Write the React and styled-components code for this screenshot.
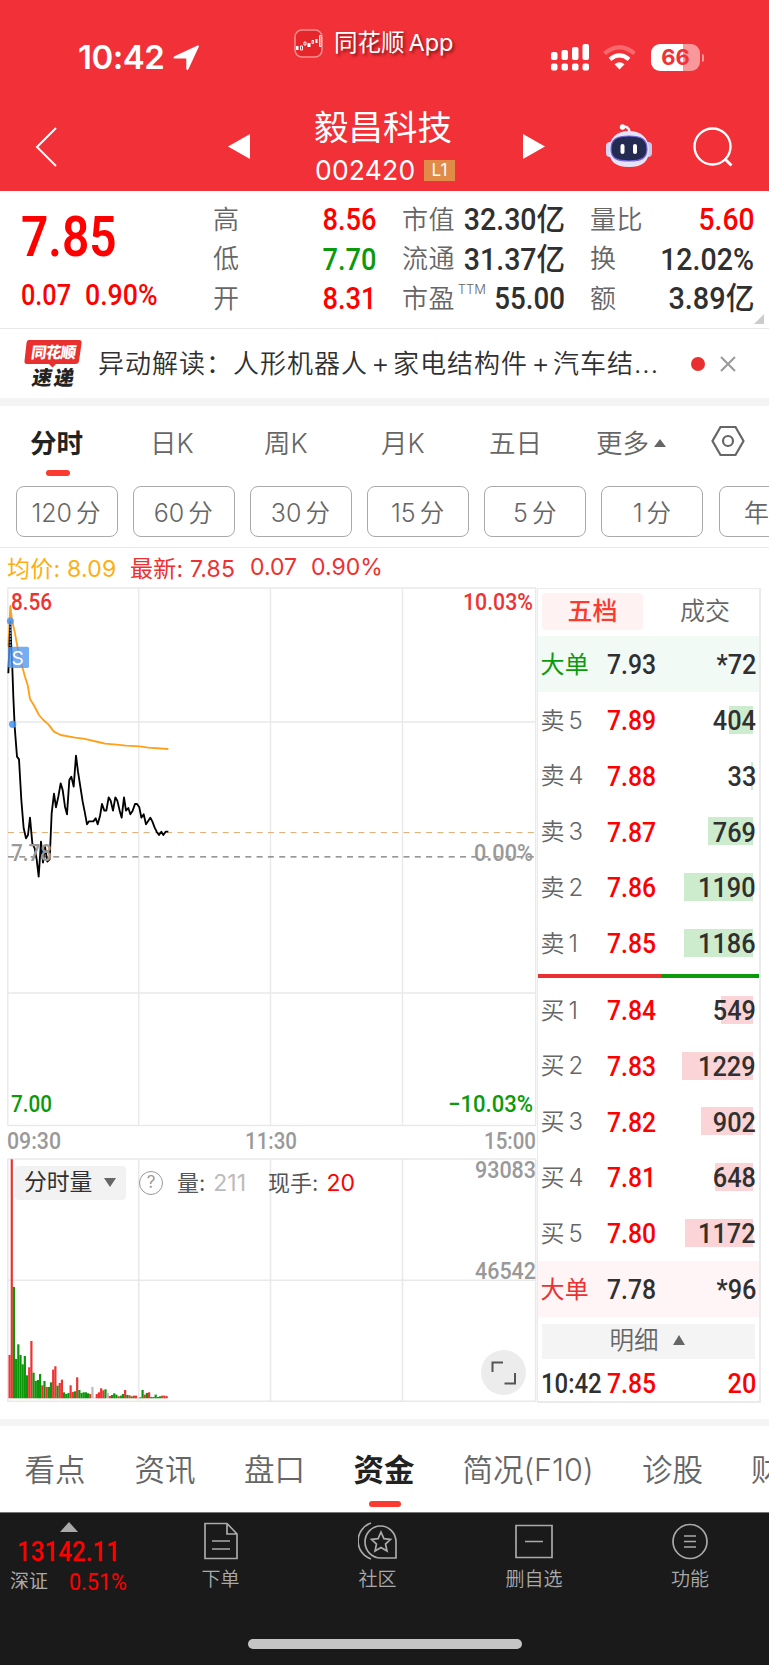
import React, { useState } from 'react';
import styled, { createGlobalStyle } from 'styled-components';

const GlobalStyle = createGlobalStyle`
  * {
    box-sizing: border-box;
  }

  body {
    margin: 0;
    background: #fff;
    font-family: Inter, 'Noto Sans CJK SC', sans-serif;
    overflow-x: hidden;
  }
`

const Page = styled.div`
  width: 769px;
  height: 1665px;
  overflow: hidden;
  display: flex;
  flex-direction: column;
`

const Din = styled.span`
  display: inline-block;
  font-family: Roboto, 'Noto Sans CJK SC', sans-serif;
  font-weight: ${props => props.$weight || 500};
  font-size: ${props => props.$size}px;
  line-height: 1;
  white-space: nowrap;
  color: ${props => props.$color || '#303030'};
  transform: scaleX(${props => props.$sx || 1});
  transform-origin: ${props => props.$origin || 'left'} center;
`

/* header */

const Header = styled.header`
  height: 191px;
  flex: none;
  background: #f23037;
  color: #fff;
`

const StatusBar = styled.div`
  height: 100px;
  display: flex;
  align-items: flex-start;
`

const Clock = styled.div`
  width: 94px;
  margin: 40px 0 0 78px;
  font-size: 33px;
  line-height: 35px;
  font-weight: 600;
  letter-spacing: -0.5px;
`

const AppBadge = styled.div`
  display: flex;
  align-items: center;
  gap: 11px;
  width: 257px;
  margin: 29px 0 0 94px;
  height: 29px;
  font-size: 23.5px;
  line-height: 28px;
  white-space: nowrap;
  text-shadow: 2px 2px 3px rgba(60, 0, 0, .6);

  & > span {
    margin-top: -2px;
  }

  & > span > b {
    font-weight: 400;
    font-size: 23.5px;
    margin-left: 4px;
  }
`

const Indicators = styled.div`
  display: flex;
  align-items: center;
  margin-top: 44px;
`

const Battery = styled.div`
  width: 49px;
  height: 27px;
  margin-left: 15px;
  border-radius: 9px;
  background: linear-gradient(90deg, #fff 66%, #f9989b 66%);
  color: #f23037;
  font-size: 22px;
  line-height: 27px;
  font-weight: 700;
  text-align: center;
`

const BatteryTip = styled.div`
  width: 2px;
  height: 8px;
  margin-left: 2px;
  border-radius: 0 2px 2px 0;
  background: #f9989b;
`

const NavBar = styled.div`
  height: 91px;
  display: flex;
  align-items: flex-start;

  & > svg {
    flex: none;
    display: block;
  }
`

const TitleBlock = styled.div`
  width: 273px;
  padding-left: 64px;
  margin-top: 5px;

  & > h1 {
    margin: 0;
    font-size: 34.5px;
    line-height: 46px;
    font-weight: 400;
    white-space: nowrap;
  }
`

const CodeLine = styled.div`
  display: flex;
  align-items: center;
  height: 24px;
  margin-top: 7px;
  font-size: 26.5px;
  line-height: 24px;

  & > span {
    width: 109px;
    margin-left: 1px;
    letter-spacing: 0.2px;
  }
`

const Level = styled.em`
  width: 31px;
  height: 21px;
  background: #e08c48;
  font-style: normal;
  font-size: 17px;
  line-height: 21px;
  text-align: center;
`

/* quote */

const Quote = styled.section`
  height: 138px;
  flex: none;
  display: flex;
  border-bottom: 1px solid #e8e8e8;
  position: relative;
`

const Main = styled.div`
  width: 213px;
  padding: 19px 0 0 21px;
`

const MainChange = styled.div`
  display: flex;
  margin-top: 16px;

  & > span:first-child {
    width: 64px;
  }
`

const StatColumn = styled.div`
  width: ${props => props.$width}px;
  margin-right: ${props => props.$gap || 0}px;
  padding-top: 9px;
`

const Stat = styled.div`
  height: 39.6px;
  display: flex;
  align-items: center;
  justify-content: space-between;
`

const Label = styled.span`
  font-size: 26px;
  line-height: 36px;
  font-weight: 350;
  letter-spacing: 0.4px;
  color: #666;
  white-space: nowrap;

  & > sup {
    display: inline-block;
    width: 0;
    font-size: 13px;
    letter-spacing: 0;
    line-height: 0;
    vertical-align: 14px;
    margin-left: 3px;
  }
`

const Corner = styled.i`
  position: absolute;
  right: 5px;
  bottom: 4px;
  border-bottom: 10px solid #ccc;
  border-left: 10px solid transparent;
`

const News = styled.div`
  height: 69px;
  flex: none;
  display: flex;
  align-items: center;
  padding-left: 24px;
`

const NewsText = styled.div`
  width: 593px;
  margin-left: 15px;
  font-size: 26px;
  letter-spacing: 1px;
  line-height: 38px;
  font-weight: 350;
  color: #303030;
  white-space: nowrap;

  & > b {
    display: inline-block;
    width: 25px;
    text-align: center;
    font-weight: 300;
    font-size: 28px;
    letter-spacing: 0;
  }
`

const Dot = styled.i`
  width: 14px;
  height: 14px;
  border-radius: 50%;
  background: #e93030;
  margin-right: 15px;
`

const Band = styled.div`
  height: 8px;
  flex: none;
  background: #f4f4f4;
`

/* period tabs */

const Periods = styled.nav`
  height: 80px;
  flex: none;
  display: grid;
  grid-template-columns: 120px 114px 117px 108px 107px 115px 60px;
  padding-left: 30px;
`

const Period = styled.div`
  padding-top: 18px;
  font-size: 26.5px;
  line-height: 38px;
  white-space: nowrap;
  font-weight: ${props => props.$active ? 600 : 350};
  color: ${props => props.$active ? '#222' : '#666'};
  cursor: pointer;
`

const Underline = styled.i`
  display: block;
  width: ${props => props.$width}px;
  height: 6px;
  border-radius: 3px;
  background: #fb3a30;
  margin: ${props => props.$margin};
`

const Caret = styled.i`
  display: inline-block;
  border: ${props => props.$size}px solid transparent;
  border-top-width: 0;
  border-bottom: ${props => props.$height}px solid ${props => props.$color || '#666'};
  transform: ${props => props.$down ? 'rotate(180deg)' : 'none'};
`

const Minutes = styled.div`
  height: 62px;
  flex: none;
  display: flex;
  gap: 15.2px;
  padding-left: 15.5px;
  overflow: hidden;
  border-bottom: 1px solid #e8e8e8;
`

const Minute = styled.button`
  flex: none;
  width: 102px;
  height: 51px;
  padding: 0 1px 1px 0;
  border: 1px solid #aaa;
  border-radius: 8px;
  background: #fff;
  color: #666;
  font: 350 25px Inter, 'Noto Sans CJK SC', sans-serif;
  white-space: nowrap;

  & > span {
    margin-left: 4px;
    font-size: 24.5px;
  }
`

const Legend = styled.div`
  height: 40px;
  flex: none;
  display: flex;
  align-items: center;
  padding: 0 0 2px 7px;
  font-size: 23px;
  white-space: nowrap;
`

const LegendItem = styled.div`
  width: ${props => props.$width}px;
  color: ${props => props.$color || '#ee3030'};
  letter-spacing: ${props => props.$spacing || 0}px;
`

/* chart + order book */

const Trading = styled.section`
  height: 831px;
  flex: none;
  display: flex;
`

const Charts = styled.div`
  width: 537px;
  display: flex;
  flex-direction: column;
  position: relative;

  & svg {
    display: block;
    overflow: visible;
  }
`

const VolumeBar = styled.div`
  position: absolute;
  left: 15px;
  top: 578px;
  height: 34px;
  display: flex;
  align-items: center;
  font-size: 22px;
  line-height: 30px;
  color: #555;
  white-space: nowrap;
`

const Select = styled.div`
  width: 111px;
  height: 34px;
  display: flex;
  align-items: center;
  padding: 0 0 2px 9px;
  gap: 12px;
  border-radius: 4px;
  background: #f2f2f2;
  color: #303030;
  font-size: 22.8px;
`

const Help = styled.i`
  width: 24px;
  height: 24px;
  margin: 0 14px 0 13px;
  border: 1.5px solid #999;
  border-radius: 50%;
  font-style: normal;
  font-size: 17px;
  line-height: 21px;
  text-align: center;
  color: #999;
`

const VolumeValue = styled.span`
  color: ${props => props.$color};
  margin: 0 ${props => props.$gap}px 0 8px;
  font-size: 23px;
`

const Expand = styled.div`
  position: absolute;
  left: 481px;
  top: 762px;
  width: 45px;
  height: 45px;
  border-radius: 50%;
  background: #ececec;
`

const Book = styled.div`
  width: 224px;
  height: 815px;
  border: 2px solid #ebebeb;
  border-top-width: 1px;
  border-left-width: 1px;
`

const BookTabs = styled.div`
  height: 47px;
  display: grid;
  grid-template-columns: 101px 1fr;
  padding: 4px 4px 6px 4px;
`

const BookTab = styled.div`
  border-radius: 4px;
  background: ${props => props.$active ? '#fff2f2' : 'none'};
  color: ${props => props.$active ? '#fb3a30' : '#666'};
  font-weight: ${props => props.$active ? 500 : 350};
  font-size: 25px;
  line-height: 37px;
  text-align: center;
  padding-left: ${props => props.$active ? 0 : 12}px;
`

const BookRow = styled.div`
  height: 55.8px;
  display: grid;
  grid-template-columns: 66.5px 60px 1fr;
  align-items: center;
  padding: 2px 3px 0 2.5px;
  background: ${props => props.$bg || 'none'};
  position: relative;
`

const Side = styled.span`
  font-size: 24px;
  line-height: 34px;
  font-weight: ${props => props.$color ? 400 : 350};
  color: ${props => props.$color || '#666'};
  letter-spacing: ${props => props.$color ? 0.3 : 0}px;
  white-space: nowrap;

  & > b {
    font-weight: 350;
    margin-left: 4px;
  }
`

const Amount = styled.span`
  text-align: right;
  position: relative;
`

const Depth = styled.i`
  position: absolute;
  right: 6px;
  top: 14px;
  height: 28px;
  background: ${props => props.$color};
`

const Split = styled.div`
  height: 4px;
  margin: 3px 0 4px;
  background: linear-gradient(90deg, #ea3030 55.5%, #0b9a0b 55.5%);
`

const Detail = styled.div`
  height: 35px;
  margin: 7px 4px 0 4px;
  padding: 0 3px 2px 0;
  display: flex;
  align-items: center;
  justify-content: center;
  gap: 14px;
  background: #f4f4f4;
  color: #666;
  font-size: 24.5px;
  line-height: 33px;
  font-weight: 350;
`

/* bottom */

const Sections = styled.nav`
  height: 86px;
  flex: none;
  display: grid;
  grid-template-columns: 110px 109.5px 109.5px 109px 179.5px 109px 60px;
  padding-left: 24.5px;
`

const Section = styled.div`
  padding-top: 21px;
  font-size: 30.5px;
  line-height: 46px;
  white-space: nowrap;
  font-weight: ${props => props.$active ? 600 : 350};
  color: ${props => props.$active ? '#222' : '#666'};
  cursor: pointer;
`

const TabBar = styled.footer`
  flex: 1;
  display: flex;
  flex-direction: column;
  align-items: center;
  justify-content: space-between;
  background: #1a1a1a;
  border-top: 1px solid #777;
`

const TabItems = styled.div`
  width: 100%;
  height: 90px;
  display: grid;
  grid-template-columns: 142px 157px 157px 156px 156px;
`

const Index = styled.div`
  display: flex;
  flex-direction: column;
  align-items: center;
  padding: 9px 4px 0 0;
`

const IndexName = styled.div`
  display: flex;
  align-items: center;
  width: 127px;
  height: 24px;
  margin: 4px 0 0 9px;
  color: #aaa;
  font-size: 19px;
  line-height: 24px;

  & > span:first-child {
    width: 59px;
  }
`

const TabItem = styled.div`
  display: flex;
  flex-direction: column;
  align-items: center;
  padding-top: 8px;
  color: #aaa;
  font-size: 19px;
  line-height: 26px;
  font-weight: 350;

  & > svg {
    margin-bottom: 6px;
  }
`

const HomeBar = styled.div`
  width: 274px;
  height: 10px;
  margin-bottom: 16px;
  border-radius: 5px;
  background: #c5c5c5;
`

const RED = '#ff0000';
const GREEN = '#0b9a0b';

const stats = [
  {
    width: 163,
    gap: 26,
    items: [
      { label: '高', value: '8.56', color: RED },
      { label: '低', value: '7.70', color: GREEN },
      { label: '开', value: '8.31', color: RED },
    ],
  },
  {
    width: 163,
    gap: 25,
    items: [
      { label: '市值', value: '32.30亿', sx: 0.92 },
      { label: '流通', value: '31.37亿', sx: 0.92 },
      { label: '市盈', value: '55.00', sx: 0.895, note: 'TTM' },
    ],
  },
  {
    width: 164,
    items: [
      { label: '量比', value: '5.60', color: RED, sx: 0.91 },
      { label: '换', value: '12.02%', sx: 0.92 },
      { label: '额', value: '3.89亿', sx: 0.93 },
    ],
  },
];

const sells = [
  ['5', '7.89', '404', 24],
  ['4', '7.88', '33', 2],
  ['3', '7.87', '769', 45],
  ['2', '7.86', '1190', 69],
  ['1', '7.85', '1186', 69],
];

const buys = [
  ['1', '7.84', '549', 32],
  ['2', '7.83', '1229', 71],
  ['3', '7.82', '902', 52],
  ['4', '7.81', '648', 38],
  ['5', '7.80', '1172', 68],
];

const PRICE = '25,280 28,205 31,125 34,205 37,265 40,350 44,440 51,530 57,538 64,660 71,745 78,775 84,765 90,713 97,790 104,805 110,838 116,890 123,785 129,848 135,800 142,845 149,838 155,700 162,641 168,682 175,650 182,610 188,630 195,680 201,703 208,600 214,590 221,620 228,527 234,575 241,620 248,665 254,695 261,733 267,724 280,724 287,715 293,733 300,708 306,672 313,692 319,692 326,652 332,662 339,692 346,652 352,662 359,692 365,713 372,652 378,692 385,684 391,703 398,692 405,672 411,672 418,682 424,713 431,703 438,733 444,724 451,713 457,724 464,743 470,755 477,765 484,755 490,765 497,755 505,755';
const AVERAGE = '25,200 31,78 36,120 45,160 54,210 64,250 75,290 83,315 90,357 103,378 117,405 130,420 145,433 162,455 182,465 225,473 250,476 295,486 315,491 350,494 378,497 418,499 445,503 505,507';

// one letter of colour and a height for every minute
const VOLUMES = 'r130 r717 g334 g118 g162 g130 g102 g127 g69 r93 r172 g77 g52 g55 g73 r39 g52 r34 g34 g48 r86 r96 g38 r46 r56 g18 g13 g16 r39 r19 g21 r63 g25 g16 g18 g18 g15 r13 x34 x2 r13 r18 r30 r24 g27 x16 r7 g10 g15 g11 r6 g8 g13 r25 g10 r9 g6 r8 r8 x2 g3 g25 r11 g16 r18 g4 g4 g11 g4 g6 r8 r8 r7'.split(' ');
const VOLUME_COLORS = { r: '#ee3333', g: '#0b960b', x: '#bbbbbb' };

const AxisText = ({ x, y, width, end, color, children, size = 23 }) => (
  <text
    x={x}
    y={y}
    textAnchor={end ? 'end' : 'start'}
    textLength={width}
    lengthAdjust="spacingAndGlyphs"
    fontFamily="Roboto, sans-serif"
    fontWeight="500"
    fontSize={size}
    fill={color}
  >
    {children}
  </text>
)

const PriceChart = () => (
  <svg width="537" height="571" viewBox="0 588 537 571">
    <path d="M7.500 588H536M7.500 722H536M7.500 993H536M7.500 1125.500H536M7.800 588V1125M138.700 588V1125M270.500 588V1125M402.500 588V1125M535.700 588V1125" stroke="#e9e9e9" strokeWidth="1.4" fill="none" />
    <path d="M8 832.600H536" stroke="#dfab70" strokeDasharray="6 5.3" fill="none" />
    <path d="M8 856.800H536" stroke="#777" strokeDasharray="6 5.3" strokeWidth="1.2" fill="none" />
    <g transform="translate(0 580) scale(.33333)" fill="none" strokeLinejoin="round">
      <polyline points={AVERAGE} stroke="#ff9f1a" strokeWidth="5.5" />
      <polyline points={PRICE} stroke="#000" strokeWidth="5.5" />
      <path d="M31 130V200" stroke="#4a8fea" strokeWidth="5" strokeDasharray="5 4" />
      <circle cx="31" cy="123" r="10.5" fill="#4a94f2" fillOpacity=".85" />
      <circle cx="38" cy="433" r="11" fill="#4a94f2" fillOpacity=".85" />
      <rect x="24" y="200" width="63" height="64" rx="5" fill="#5599f0" fillOpacity=".8" />
    </g>
    <text x="11.5" y="664.5" fontFamily="Inter" fontSize="19" fill="#fff">S</text>
    <AxisText x={11} y={610} width={41} color="#ee3333">8.56</AxisText>
    <AxisText x={533} y={610} width={70} color="#ee3333" end>10.03%</AxisText>
    <AxisText x={11} y={861} width={41} color="#999">7.78</AxisText>
    <AxisText x={533} y={861} width={59} color="#999" end>0.00%</AxisText>
    <AxisText x={11} y={1112} width={41} color={GREEN}>7.00</AxisText>
    <AxisText x={533} y={1112} width={85} color={GREEN} end>−10.03%</AxisText>
    <AxisText x={7} y={1149} width={54} color="#999">09:30</AxisText>
    <AxisText x={245} y={1149} width={52} color="#999">11:30</AxisText>
    <AxisText x={536} y={1149} width={52} color="#999" end>15:00</AxisText>
  </svg>
)

const VolumeChart = () => (
  <svg width="537" height="244" viewBox="0 1159 537 244">
    <path d="M7.500 1159H536M7.500 1280.300H536M7.500 1401.300H536M7.800 1159V1402M138.700 1159V1402M270.500 1159V1402M402.500 1159V1402M535.700 1159V1402" stroke="#e9e9e9" strokeWidth="1.6" fill="none" />
    {VOLUMES.map((bar, i) => {
      const height = Number(bar.slice(1)) / 3;
      return (
        <rect key={i} x={8.5 + i * 2.18} y={1398.3 - height} width="2.2" height={height} fill={VOLUME_COLORS[bar[0]]} />
      );
    })}
    <AxisText x={536} y={1177.5} width={61} color="#999" end>93083</AxisText>
    <AxisText x={536} y={1278.5} width={61} color="#999" end>46542</AxisText>
  </svg>
)

const NewsLogo = () => (
  <svg width="59" height="49" viewBox="0 0 59 49" overflow="visible">
    <path d="M5 1H55Q58 1 57.6 4L55 22Q54.500 25 51.500 25H32L28.500 28.500L25 25H3Q0 25 .5 22L2.500 4Q3 1 5 1Z" fill="#e8302f" />
    <g fontFamily="'Noto Sans CJK SC'" fontWeight="900">
      <text transform="translate(6.500 19) skewX(-8)" fontSize="15.500" textLength="45" fill="#fff">同花顺</text>
      <text transform="translate(7 46) skewX(-10)" fontSize="20" textLength="42" fill="#222">速递</text>
    </g>
  </svg>
)

const Robot = () => (
  <svg width="48" height="44" viewBox="0 0 48 44" style={{ margin: '24px 0 0 60px' }}>
    <path d="M18 3Q24 2 24.500 8" stroke="#f1eefc" strokeWidth="2.500" fill="none" />
    <circle cx="17.500" cy="3" r="2.700" fill="#fff" />
    <rect x="1" y="18" width="8" height="15" rx="4" fill="#d5d5f4" />
    <rect x="39" y="18" width="8" height="15" rx="4" fill="#c9c8ef" />
    <path d="M24 7C36 7 44 14 44 26C44 37 38 43 24 43C10 43 4 37 4 26C4 14 12 7 24 7Z" fill="#e4e3fa" />
    <path d="M24 12C36 12 42 15 42 25C42 34 37 37 24 37C11 37 6 34 6 25C6 15 12 12 24 12Z" fill="#232b50" stroke="#7566dc" strokeWidth="1.200" />
    <rect x="15.500" y="20" width="4" height="10" rx="2" fill="#fff" />
    <rect x="28" y="20" width="4" height="10" rx="2" fill="#fff" />
  </svg>
)

const OrderRow = ({ side, row, color }) => {
  const [level, price, amount, width] = row;
  return (
    <BookRow>
      <Depth $color={color} style={{ width }} />
      <Side>{side}<b>{level}</b></Side>
      <Din $size={27.5} $sx={0.9} $color={RED}>{price}</Din>
      <Amount><Din $size={27.5} $sx={0.92} $origin="right">{amount}</Din></Amount>
    </BookRow>
  );
}

const BigOrder = ({ price, amount, color, bg }) => (
  <BookRow $bg={bg}>
    <Side $color={color}>大单</Side>
    <Din $size={27.5} $sx={0.9}>{price}</Din>
    <Amount><Din $size={27.5} $sx={0.92} $origin="right">{amount}</Din></Amount>
  </BookRow>
)

const App = () => {
  const [period, setPeriod] = useState('分时');
  const [section, setSection] = useState('资金');

  return (
    <Page>
      <GlobalStyle />
      <Header>
        <StatusBar>
          <Clock>10:42</Clock>
          <svg width="28" height="28" viewBox="0 0 28 28" style={{ marginTop: 44 }}>
            <path d="M25.500 1.500Q27.500 1 26.700 3L16.500 25Q15 27.500 14.300 24.500V14.500H3Q-.5 14 3 12Z" fill="#fff" />
          </svg>
          <AppBadge>
            <svg width="29" height="29" viewBox="0 0 29 29">
              <rect x="1" y="1" width="27" height="27" rx="7" fill="#e5262b" stroke="#f58e90" strokeWidth="1.500" />
              <path d="M2 17h2.500v4H2zM13.500 14h3v4h-3zM21.500 10h2v4h-2z" fill="#fff" />
              <path d="M6.500 17h2v4h-2zM10 13h2v3h-2zM18 11.500h1.500v3H18zM25.500 6.500h1.500v11h-1.500z" stroke="#fff" strokeWidth=".9" fill="none" />
            </svg>
            <span>同花顺<b>App</b></span>
          </AppBadge>
          <Indicators>
            <svg width="38" height="27" viewBox="0 0 38 27" fill="#fff">
              <rect x="0" y="8" width="6.500" height="8" rx="2" />
              <rect x="10.500" y="6" width="6.500" height="10" rx="2" />
              <rect x="21" y="3" width="6.500" height="13" rx="2" />
              <rect x="31.500" y="0" width="6.500" height="16" rx="2" />
              <rect x="0" y="19.500" width="6.500" height="7" rx="2" />
              <rect x="10.500" y="19.500" width="6.500" height="7" rx="2" />
              <rect x="21" y="19.500" width="6.500" height="7" rx="2" />
              <rect x="31.500" y="19.500" width="6.500" height="7" rx="2" />
            </svg>
            <svg width="33" height="25" viewBox="0 0 33 25" fill="none" style={{ marginLeft: 14 }}>
              <path d="M1.500 8.500Q16.500-4 31.500 8.500" stroke="#f8686d" strokeWidth="4.200" />
              <path d="M7 14.300Q16.500 6.500 26 14.300" stroke="#fff" strokeWidth="4.200" />
              <path d="M16.500 24.500L11.500 19.300Q16.500 15 21.500 19.300Z" fill="#fff" />
            </svg>
            <Battery>66</Battery>
            <BatteryTip />
          </Indicators>
        </StatusBar>
        <NavBar>
          <svg width="22" height="40" viewBox="0 0 22 40" style={{ margin: '27px 0 0 35px' }}>
            <path d="M21 1L2 20L21 39" stroke="#fff" strokeWidth="2" fill="none" />
          </svg>
          <svg width="22" height="25" viewBox="0 0 22 25" style={{ margin: '34px 0 0 171px' }}>
            <path d="M22 0V25L0 12.500Z" fill="#fff" />
          </svg>
          <TitleBlock>
            <h1>毅昌科技</h1>
            <CodeLine>
              <span>002420</span>
              <Level>L1</Level>
            </CodeLine>
          </TitleBlock>
          <svg width="22" height="25" viewBox="0 0 22 25" style={{ margin: '34px 0 0 0' }}>
            <path d="M0 0V25L22 12.500Z" fill="#fff" />
          </svg>
          <Robot />
          <svg width="40" height="40" viewBox="0 0 40 40" style={{ margin: '27px 0 0 40px' }}>
            <circle cx="19.500" cy="19.500" r="18" stroke="#fff" strokeWidth="2.400" fill="none" />
            <path d="M31.500 31.500L38.500 38.500" stroke="#fff" strokeWidth="2.800" />
          </svg>
        </NavBar>
      </Header>

      <Quote>
        <Main>
          <Din $size={55} $sx={0.87} $color={RED} $weight={600}>7.85</Din>
          <MainChange>
            <Din $size={29} $sx={0.87} $color={RED}>0.07</Din>
            <Din $size={29} $sx={0.92} $color={RED}>0.90%</Din>
          </MainChange>
        </Main>
        {stats.map(column => (
          <StatColumn key={column.items[0].label} $width={column.width} $gap={column.gap}>
            {column.items.map(item => (
              <Stat key={item.label}>
                <Label>{item.label}{item.note && <sup>{item.note}</sup>}</Label>
                <Din $size={31} $sx={item.sx || 0.88} $origin="right" $color={item.color}>{item.value}</Din>
              </Stat>
            ))}
          </StatColumn>
        ))}
        <Corner />
      </Quote>

      <News>
        <NewsLogo />
        <NewsText>异动解读：人形机器人<b>+</b>家电结构件<b>+</b>汽车结...</NewsText>
        <Dot />
        <svg width="16" height="16" viewBox="0 0 16 16">
          <path d="M1 1L15 15M15 1L1 15" stroke="#999" strokeWidth="2" />
        </svg>
      </News>
      <Band />

      <Periods>
        {['分时', '日K', '周K', '月K', '五日', '更多'].map(name => (
          <Period key={name} $active={name === period} onClick={() => setPeriod(name)}>
            {name}
            {name === '更多' && <Caret $size={6} $height={8} style={{ margin: '0 0 6px 5px' }} />}
            {name === period && <Underline $width={24} $margin="8px 0 0 16px" />}
          </Period>
        ))}
        <svg width="34" height="32" viewBox="0 0 34 32" style={{ marginTop: 19 }} fill="none" stroke="#666" strokeWidth="2.2">
          <path d="M9.500 2H24.500L32.500 16L24.500 30H9.500L1.500 16Z" />
          <circle cx="17" cy="16" r="5" />
        </svg>
      </Periods>
      <Minutes>
        {['120', '60', '30', '15', '5', '1'].map(n => (
          <Minute key={n}>{n}<span>分</span></Minute>
        ))}
        <Minute>年线</Minute>
      </Minutes>

      <Legend>
        <LegendItem $width={123} $color="#ffae10" $spacing={0.25}>均价: 8.09</LegendItem>
        <LegendItem $width={120} $spacing={0.2}>最新: 7.85</LegendItem>
        <LegendItem $width={61}>0.07</LegendItem>
        <LegendItem $width={80}>0.90%</LegendItem>
      </Legend>

      <Trading>
        <Charts>
          <PriceChart />
          <VolumeChart />
          <VolumeBar>
            <Select>分时量<Caret $size={6} $height={9} $down /></Select>
            <Help>?</Help>
            量:<VolumeValue $color="#bbb" $gap={22}>211</VolumeValue>
            现手:<VolumeValue $color={RED} $gap={0}>20</VolumeValue>
          </VolumeBar>
          <Expand>
            <svg width="45" height="45" viewBox="0 0 45 45" fill="none" stroke="#555" strokeWidth="2">
              <path d="M11.500 22V12.500H22M34 23V33.500H23.500" />
            </svg>
          </Expand>
        </Charts>
        <Book>
          <BookTabs>
            <BookTab $active>五档</BookTab>
            <BookTab>成交</BookTab>
          </BookTabs>
          <BigOrder price="7.93" amount="*72" color={GREEN} bg="#f2faf6" />
          {sells.map(row => <OrderRow key={row[0]} side="卖" row={row} color="#cdebcd" />)}
          <Split />
          {buys.map(row => <OrderRow key={row[0]} side="买" row={row} color="#fad4d6" />)}
          <BigOrder price="7.78" amount="*96" color="#ee3030" bg="#fff5f6" />
          <Detail>明细<Caret $size={6.5} $height={10} /></Detail>
          <BookRow style={{ height: 48 }}>
            <Din $size={27.5} $sx={0.87}>10:42</Din>
            <Din $size={27.5} $sx={0.9} $color={RED}>7.85</Din>
            <Amount><Din $size={27.5} $sx={0.92} $origin="right" $color={RED}>20</Din></Amount>
          </BookRow>
        </Book>
      </Trading>

      <Band style={{ height: 7 }} />
      <Sections>
        {['看点', '资讯', '盘口', '资金', '简况(F10)', '诊股', '财务'].map(name => (
          <Section key={name} $active={name === section} onClick={() => setSection(name)}>
            {name}
            {name === section && <Underline $width={32} $margin="8px 0 0 15px" />}
          </Section>
        ))}
      </Sections>

      <TabBar>
        <TabItems>
          <Index>
            <Caret $size={9} $height={10} $color="#aaa" />
            <Din $size={27.5} $sx={0.88} $color={RED} $origin="center" style={{ marginTop: 6 }}>13142.11</Din>
            <IndexName>
              <span>深证</span>
              <Din $size={24} $sx={0.9} $color={RED} $weight={400}>0.51%</Din>
            </IndexName>
          </Index>
          <TabItem>
            <svg width="40" height="40" viewBox="0 0 40 40" fill="none" stroke="#aaa" strokeWidth="1.700">
              <path d="M4 2.500H26L36 13V37.500H4ZM26 2.500V13H36M11 20H29M11 28H29" />
            </svg>
            下单
          </TabItem>
          <TabItem>
            <svg width="40" height="40" viewBox="0 0 40 40" fill="none" stroke="#aaa" strokeWidth="1.700">
              <path d="M23 37H38V21A15.500 16 0 1 0 23 37ZM13 2A19 19 0 0 0 13 38" />
              <path d="M23 11L25.900 17.600L32.500 18.400L27.500 23L29 30L23 26.500L17 30L18.500 23L13.500 18.400L20.100 17.600Z" />
            </svg>
            社区
          </TabItem>
          <TabItem>
            <svg width="40" height="40" viewBox="0 0 40 40" fill="none" stroke="#aaa" strokeWidth="1.700">
              <path d="M2 4.500H38V36.500H2ZM11 20.500H29" />
            </svg>
            删自选
          </TabItem>
          <TabItem>
            <svg width="40" height="40" viewBox="0 0 40 40" fill="none" stroke="#aaa" strokeWidth="1.700">
              <circle cx="20" cy="20.500" r="17" />
              <path d="M14 15H26M14 20.500H26M14 26H26" />
            </svg>
            功能
          </TabItem>
        </TabItems>
        <HomeBar />
      </TabBar>
    </Page>
  );
}

export default App;
